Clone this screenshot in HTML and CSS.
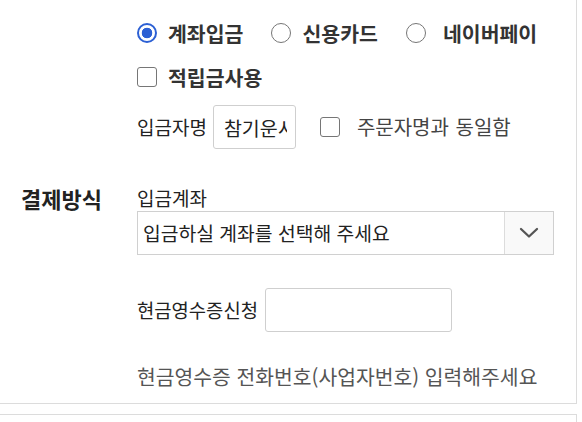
FILE: index.html
```html
<!DOCTYPE html>
<html lang="ko">
<head>
<meta charset="utf-8">
<title>결제방식</title>
<link rel="stylesheet" href="styles.css">
</head>
<body>
<section class="panel">
  <div class="th">결제방식</div>
  <div class="td">
    <div class="methods">
      <label class="option"><input class="radio" type="radio" name="pay" checked><span class="opt-text">계좌입금</span></label>
      <label class="option"><input class="radio" type="radio" name="pay"><span class="opt-text">신용카드</span></label>
      <label class="option option-wide"><input class="radio" type="radio" name="pay"><span class="opt-text">네이버페이</span></label>
    </div>
    <div class="points">
      <label class="option"><input class="check" type="checkbox"><span class="opt-text">적립금사용</span></label>
    </div>
    <div class="depositor">
      <span class="field-label">입금자명</span>
      <input class="text-input name-input" type="text" value="참기운서">
      <label class="same"><input class="check" type="checkbox"><span class="same-text">주문자명과 동일함</span></label>
    </div>
    <div class="account-label">입금계좌</div>
    <div class="select">
      <select class="select-native">
        <option>입금하실 계좌를 선택해 주세요</option>
      </select>
      <span class="select-arrow">
        <svg width="20" height="12" viewBox="0 0 20 12"><path d="M2 2 L10 9.5 L18 2" fill="none" stroke="#555" stroke-width="2.3" stroke-linecap="round" stroke-linejoin="round"/></svg>
      </span>
    </div>
    <div class="receipt">
      <span class="field-label receipt-label">현금영수증신청</span>
      <input class="text-input receipt-input" type="text">
    </div>
    <p class="help">현금영수증 전화번호(사업자번호) 입력해주세요</p>
  </div>
</section>
<section class="panel-next"></section>
</body>
</html>
```

FILE: styles.css
```css
html, body {
  margin: 0;
  padding: 0;
  background: #fff;
}
body {
  font-family: "Noto Sans CJK KR", "Noto Sans", sans-serif;
  color: #222;
  overflow: hidden;
}
.panel {
  display: flex;
  width: 576px;
  height: 403px;
  border-right: 1px solid #dcdcdc;
  border-bottom: 1px solid #dcdcdc;
}
.th {
  width: 116px;
  padding-left: 21px;
  align-self: center;
  padding-bottom: 7px;
  font-size: 22px;
  font-weight: 700;
  line-height: 28px;
  color: #222;
}
.td {
  flex: 1;
  padding-top: 23px;
}
.methods {
  display: flex;
  align-items: center;
  height: 20px;
  gap: 28px;
}
.option {
  display: flex;
  align-items: center;
  gap: 11px;
}
.option-wide {
  gap: 17px;
}
.opt-text {
  font-size: 20.5px;
  font-weight: 700;
  line-height: 20px;
  color: #333;
}
.radio {
  appearance: none;
  -webkit-appearance: none;
  box-sizing: border-box;
  width: 20px;
  height: 20px;
  margin: 0;
  border: 1.5px solid #767676;
  border-radius: 50%;
  background: #fff;
}
.radio:checked {
  border: 2px solid #2c60d4;
  background: radial-gradient(circle, #2c60d4 0 5px, #fff 5.6px);
}
.check {
  appearance: none;
  -webkit-appearance: none;
  box-sizing: border-box;
  width: 20px;
  height: 20px;
  margin: 0;
  border: 1.5px solid #767676;
  border-radius: 3px;
  background: #fff;
}
.points {
  display: flex;
  align-items: center;
  height: 20px;
  margin-top: 24px;
}
.depositor {
  display: flex;
  align-items: center;
  height: 44px;
  margin-top: 18px;
}
.field-label {
  font-size: 19px;
  line-height: 24px;
  color: #222;
}
.text-input {
  box-sizing: border-box;
  height: 44px;
  margin: 0;
  border: 1px solid #cfcfcf;
  border-radius: 3px;
  background: #fff;
  font-family: "Noto Sans CJK KR", "Noto Sans", sans-serif;
  font-size: 19.5px;
  color: #222;
  outline: none;
}
.name-input {
  width: 83px;
  margin-left: 6px;
  padding: 0 8px 0 10px;
}
.same {
  display: flex;
  align-items: center;
  gap: 17px;
  margin-left: 24px;
}
.same-text {
  font-size: 20px;
  line-height: 24px;
  color: #444;
  word-spacing: 1px;
}
.account-label {
  margin-top: 39px;
  font-size: 19px;
  line-height: 20px;
  color: #222;
}
.select {
  display: flex;
  box-sizing: border-box;
  width: 417px;
  height: 44px;
  margin-top: 3px;
  border: 1px solid #d0d0d0;
  background: #fff;
}
.select-native {
  flex: 1;
  appearance: none;
  -webkit-appearance: none;
  margin: 0;
  padding: 0 0 0 5px;
  border: 0;
  background: transparent;
  font-family: "Noto Sans CJK KR", "Noto Sans", sans-serif;
  font-size: 19.3px;
  color: #222;
  outline: none;
}
.select-arrow {
  display: flex;
  align-items: center;
  justify-content: center;
  width: 48px;
  border-left: 1px solid #dcdcdc;
  background: #f9f9f9;
}
.receipt {
  display: flex;
  align-items: center;
  gap: 7px;
  height: 44px;
  margin-top: 33px;
}
.receipt-label {
  font-size: 18.8px;
}
.receipt-input {
  width: 187px;
  padding: 0 10px;
}
.help {
  margin: 32px 0 0;
  font-size: 20.4px;
  line-height: 24px;
  color: #555;
}
.panel-next {
  width: 576px;
  height: 7px;
  margin-top: 10px;
  border-top: 1px solid #dcdcdc;
  border-right: 1px solid #dcdcdc;
}
```
